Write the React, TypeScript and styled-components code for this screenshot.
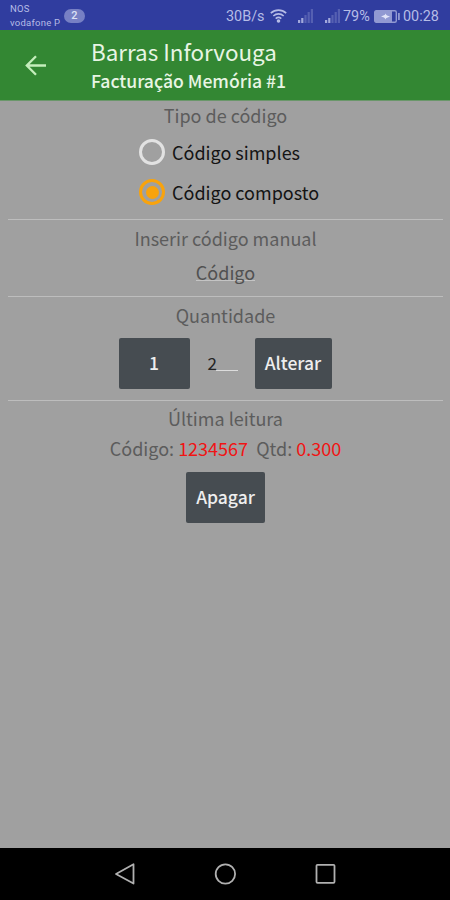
import React from "react";
import styled, { createGlobalStyle } from "styled-components";

const Global = createGlobalStyle`
  * { box-sizing: border-box; }
  body { margin: 0; background: #a0a0a0; }
`;

const Screen = styled.div`
  width: 450px;
  height: 900px;
  display: flex;
  flex-direction: column;
  overflow: hidden;
  background: #a0a0a0;
  font-family: "Noto Sans CJK SC", "Noto Sans", sans-serif;
  font-size: 18px;
`;

const StatusBar = styled.div`
  height: 30px;
  flex: none;
  display: flex;
  align-items: center;
  padding: 2px 9px 0 10px;
  background: #303d9f;
  color: #b6bce6;
  font-family: Roboto, sans-serif;
`;

const Carrier = styled.div`
  width: 54px;
  font-size: 9.5px;
  line-height: 14px;
  letter-spacing: 0.25px;
  white-space: nowrap;
`;

const Count = styled.div`
  width: 21px;
  height: 14px;
  margin: 0 auto 0 0;
  border-radius: 7px;
  background: #7780c4;
  color: #dde0f5;
  font-size: 11px;
  font-weight: 500;
  line-height: 14px;
  text-align: center;
`;

const StatusText = styled.span<{ $width: number }>`
  width: ${(p) => p.$width}px;
  padding-top: 1px;
  font-size: 14.4px;
  line-height: 28px;
  white-space: nowrap;
`;

const StatusIcon = styled.svg<{ $left?: number; $right?: number }>`
  flex: none;
  margin: 0 ${(p) => p.$right ?? 0}px 0 ${(p) => p.$left ?? 0}px;
`;

const Header = styled.header`
  height: 71px;
  flex: none;
  display: flex;
  align-items: center;
  padding-left: 24px;
  background: #338733;
  border-bottom: 1px solid #6a976a;
  color: #e8f5e4;
`;

const BackIcon = styled.svg`
  width: 24px;
  height: 24px;
  margin-right: 43px;
`;

const Titles = styled.div`
  display: flex;
  flex-direction: column;
`;

const Title = styled.div`
  height: 29px;
  font-size: 22.4px;
  line-height: 27px;
  white-space: nowrap;
`;

const Subtitle = styled.div`
  height: 26px;
  font-size: 17.6px;
  font-weight: 500;
  line-height: 28px;
  white-space: nowrap;
`;

const Section = styled.section<{ $height: number }>`
  height: ${(p) => p.$height}px;
  flex: none;
  margin: 0 7px 0 8px;
  display: flex;
  flex-direction: column;
  align-items: center;
  border-bottom: 1px solid #bdbdbd;

  &:last-of-type { border-bottom: 0; }
`;

const Label = styled.div<{ $height: number; $after?: number }>`
  height: ${(p) => p.$height}px;
  margin-bottom: ${(p) => p.$after ?? 0}px;
  line-height: ${(p) => p.$height}px;
  color: #5c5c5c;
  white-space: pre;
`;

const Option = styled.div`
  height: 40px;
  width: 180px;
  display: flex;
  align-items: center;
  gap: 7px;
  margin-left: 7px;
  color: #141414;
  white-space: nowrap;
`;

const Radio = styled.span<{ $on?: boolean }>`
  width: 26px;
  height: 26px;
  flex: none;
  display: grid;
  place-items: center;
  border: 3px solid ${(p) => (p.$on ? "#f9a30c" : "#e2e2e2")};
  border-radius: 50%;

  &::after {
    content: "";
    width: 13px;
    height: 13px;
    border-radius: 50%;
    background: ${(p) => (p.$on ? "#f9a30c" : "transparent")};
  }
`;

const CodeField = styled.div`
  height: 26px;
  margin-top: 3px;
  line-height: 26px;
  color: #515151;
  background: linear-gradient(#c4c4c4, #c4c4c4) 0 21px / 100% 1px no-repeat;
`;

const QuantityRow = styled.div`
  display: flex;
  align-items: center;
  margin: 4px 1px 0 0;
`;

const Button = styled.button<{ $width: number }>`
  width: ${(p) => p.$width}px;
  height: 51px;
  padding: 0 0 1px;
  border: 0;
  border-radius: 2px;
  background: #464c51;
  color: #eeeeee;
  font: 500 17.5px/50px "Noto Sans CJK SC", "Noto Sans", sans-serif;
`;

const QuantityField = styled.div`
  width: 31px;
  height: 26px;
  margin: 0 16px 0 18px;
  line-height: 23px;
  font-size: 17px;
  color: #242424;
  background: linear-gradient(#dcdcdc, #dcdcdc) 8px 19px / 22px 1px no-repeat;
`;

const Value = styled.span`
  color: #f01414;
`;

const ButtonRow = styled.div`
  margin-top: 11px;
`;

const NavBar = styled.nav`
  height: 52px;
  flex: none;
  margin-top: auto;
  display: flex;
  justify-content: center;
  align-items: center;
  gap: 76px;
  background: #000;
`;

const NavIcon = styled.svg`
  width: 24px;
  height: 24px;
  fill: none;
  stroke: #b0b0b0;
  stroke-width: 1.8;
  stroke-linejoin: round;
`;

function Signal({ left, right, lit }: { left: number; right: number; lit: number }) {
  return (
    <StatusIcon $left={left} $right={right} width="16" height="14" viewBox="0 0 16 14" fill="#b6bce6">
      {[3, 5, 8, 11, 14].map((h, i) => (
        <rect key={h} x={i * 3.2} y={14 - h} width="2.2" height={h} opacity={i < lit ? 0.85 : 0.28} />
      ))}
    </StatusIcon>
  );
}

export default function App() {
  return (
    <>
      <Global />
      <Screen>
        <StatusBar>
          <Carrier>NOS<br />vodafone P</Carrier>
          <Count>2</Count>
          <StatusText $width={40}>30B/s</StatusText>
          <StatusIcon $left={4} width="17" height="14" viewBox="0 0 17 14" fill="none" stroke="#b6bce6" strokeWidth="1.6">
            <path d="M.8 4.2C5.3.1 11.7.1 16.2 4.2M3.3 7c3-2.8 7.4-2.8 10.4 0M5.7 9.6c1.7-1.5 3.9-1.5 5.6 0" />
            <circle cx="8.5" cy="12" r="1" fill="#b6bce6" />
          </StatusIcon>
          <Signal left={11} right={11} lit={2} />
          <Signal left={0} right={2} lit={2} />
          <StatusText $width={27}>79%</StatusText>
          <StatusIcon $left={4} $right={3} width="26" height="13" viewBox="0 0 26 13">
            <rect x=".7" y=".7" width="21.6" height="11.6" rx="1.5" fill="none" stroke="#9199d2" strokeWidth="1.4" />
            <rect x="1" y="1" width="17" height="11" fill="#9199d2" />
            <path d="M7 6.5 11 4.8V3.5l2 2 3 1-4 1.7v1.3l-2-2z" fill="#e1e4f8" />
            <rect x="24" y="3" width="1.8" height="7" fill="#9199d2" />
          </StatusIcon>
          <StatusText $width={38}>00:28</StatusText>
        </StatusBar>
        <Header>
          <BackIcon viewBox="0 0 24 24" fill="none" stroke="#c5eebc" strokeWidth="2.3">
            <path d="M22 12.5H3.2M12 3.3 2.8 12.5l9.2 9.2" />
          </BackIcon>
          <Titles>
            <Title>Barras Inforvouga</Title>
            <Subtitle>Facturação Memória #1</Subtitle>
          </Titles>
        </Header>
        <Section $height={119}>
          <Label $height={28} $after={3}>Tipo de código</Label>
          <Option><Radio />Código simples</Option>
          <Option><Radio $on />Código composto</Option>
        </Section>
        <Section $height={77}>
          <Label $height={36}>Inserir código manual</Label>
          <CodeField>Código</CodeField>
        </Section>
        <Section $height={104}>
          <Label $height={37}>Quantidade</Label>
          <QuantityRow>
            <Button $width={71}>1</Button>
            <QuantityField>2</QuantityField>
            <Button $width={77}>Alterar</Button>
          </QuantityRow>
        </Section>
        <Section $height={140}>
          <Label $height={34}>Última leitura</Label>
          <Label $height={26}>Código: <Value>1234567</Value>{"  "}Qtd: <Value>0.300</Value></Label>
          <ButtonRow>
            <Button $width={79}>Apagar</Button>
          </ButtonRow>
        </Section>
        <NavBar>
          <NavIcon viewBox="0 0 24 24"><path d="M20.5 2.2v19.3L3 12z" /></NavIcon>
          <NavIcon viewBox="0 0 24 24"><circle cx="12.4" cy="12" r="9.7" /></NavIcon>
          <NavIcon viewBox="0 0 24 24"><rect x="3.5" y="2.8" width="18" height="18" rx="1" /></NavIcon>
        </NavBar>
      </Screen>
    </>
  );
}
